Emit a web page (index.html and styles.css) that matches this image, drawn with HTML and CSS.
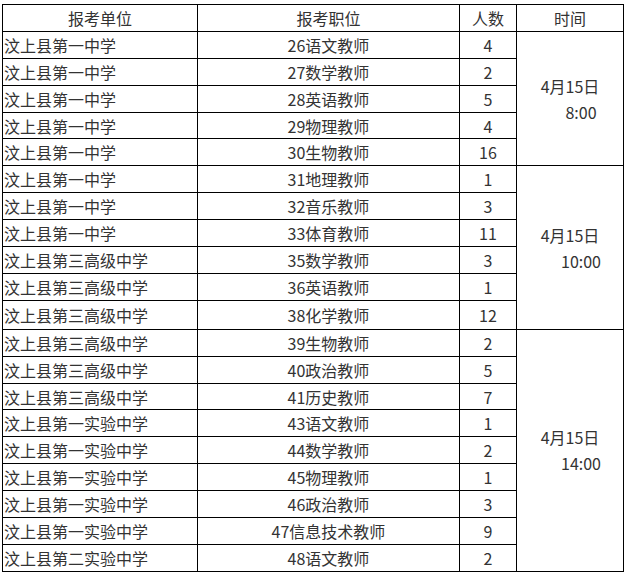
FILE: index.html
```html
<!DOCTYPE html>
<html lang="zh">
<head>
<meta charset="utf-8">
<link rel="stylesheet" href="styles.css">
</head>
<body>
<table class="plan">
<colgroup><col class="c1"><col class="c2"><col class="c3"><col class="c4"></colgroup>
<thead>
<tr><th>报考单位</th><th>报考职位</th><th>人数</th><th>时间</th></tr>
</thead>
<tbody>
<tr><td class="unit">汶上县第一中学</td><td>26语文教师</td><td>4</td><td class="time" rowspan="5">4月15日<br><span class="hour">8:00</span></td></tr>
<tr><td class="unit">汶上县第一中学</td><td>27数学教师</td><td>2</td></tr>
<tr><td class="unit">汶上县第一中学</td><td>28英语教师</td><td>5</td></tr>
<tr><td class="unit">汶上县第一中学</td><td>29物理教师</td><td>4</td></tr>
<tr><td class="unit">汶上县第一中学</td><td>30生物教师</td><td>16</td></tr>
<tr><td class="unit">汶上县第一中学</td><td>31地理教师</td><td>1</td><td class="time" rowspan="6">4月15日<br><span class="hour">10:00</span></td></tr>
<tr><td class="unit">汶上县第一中学</td><td>32音乐教师</td><td>3</td></tr>
<tr><td class="unit">汶上县第一中学</td><td>33体育教师</td><td>11</td></tr>
<tr><td class="unit">汶上县第三高级中学</td><td>35数学教师</td><td>3</td></tr>
<tr><td class="unit">汶上县第三高级中学</td><td>36英语教师</td><td>1</td></tr>
<tr class="tall"><td class="unit">汶上县第三高级中学</td><td>38化学教师</td><td>12</td></tr>
<tr><td class="unit">汶上县第三高级中学</td><td>39生物教师</td><td>2</td><td class="time" rowspan="9">4月15日<br><span class="hour">14:00</span></td></tr>
<tr><td class="unit">汶上县第三高级中学</td><td>40政治教师</td><td>5</td></tr>
<tr><td class="unit">汶上县第三高级中学</td><td>41历史教师</td><td>7</td></tr>
<tr><td class="unit">汶上县第一实验中学</td><td>43语文教师</td><td>1</td></tr>
<tr><td class="unit">汶上县第一实验中学</td><td>44数学教师</td><td>2</td></tr>
<tr><td class="unit">汶上县第一实验中学</td><td>45物理教师</td><td>1</td></tr>
<tr><td class="unit">汶上县第一实验中学</td><td>46政治教师</td><td>3</td></tr>
<tr><td class="unit">汶上县第一实验中学</td><td>47信息技术教师</td><td>9</td></tr>
<tr><td class="unit">汶上县第二实验中学</td><td>48语文教师</td><td>2</td></tr>
</tbody>
</table>
</body>
</html>
```

FILE: styles.css
```css
html, body {
  margin: 0;
  background: #fff;
}
body {
  padding: 4px 0 0 2px;
  font-family: "Noto Sans CJK SC", "Noto Sans", sans-serif;
  font-size: 16px;
  color: #333;
}
.plan {
  border-collapse: collapse;
  table-layout: fixed;
  width: 621px;
}
.c1 { width: 195px; }
.c2 { width: 262px; }
.c3 { width: 57px; }
.c4 { width: 107px; }
.plan th, .plan td {
  border: 1px solid #000;
  padding: 0 2px;
  text-align: center;
  font-weight: normal;
  line-height: 20px;
  white-space: nowrap;
  overflow: hidden;
}
.plan tr {
  height: 26.9px;
}
.plan tr.tall {
  height: 29px;
}
.plan td.unit {
  text-align: left;
  padding-left: 1px;
}
.plan td.time {
  line-height: 26px;
}
.hour {
  padding-left: 22px;
}
```
